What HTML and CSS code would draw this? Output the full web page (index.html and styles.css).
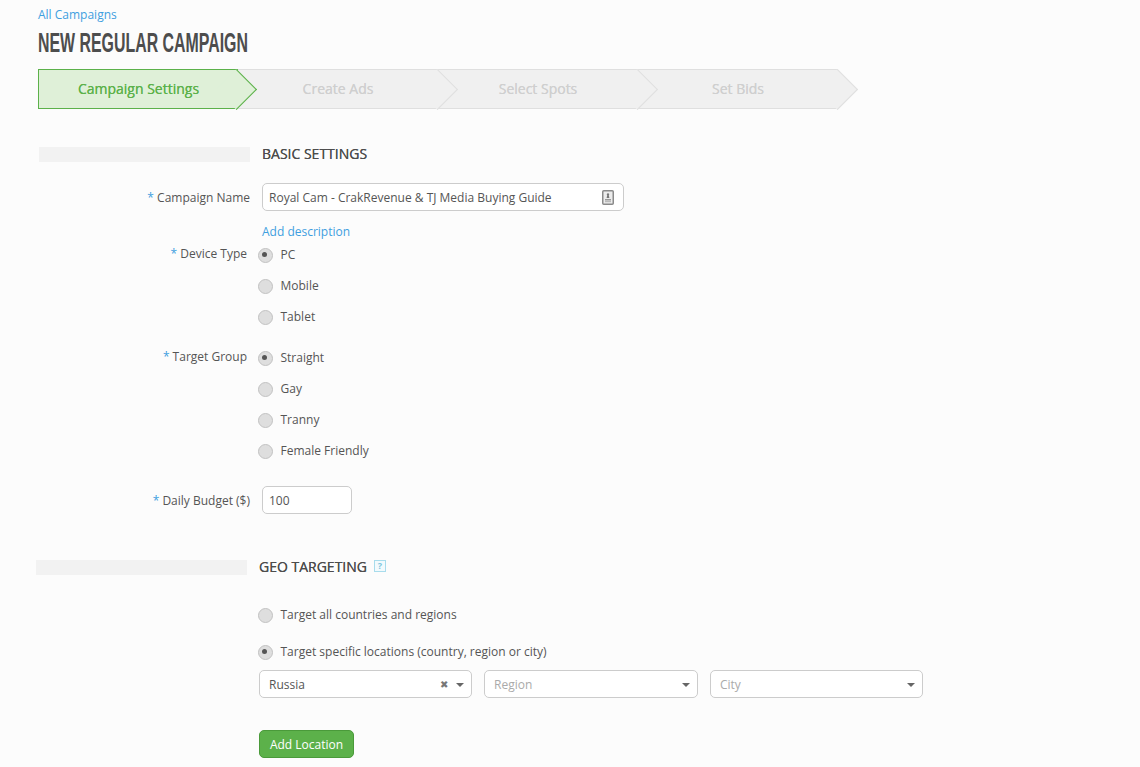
FILE: index.html
```html
<!DOCTYPE html>
<html lang="en">
<head>
<meta charset="utf-8">
<title>New Regular Campaign</title>
<link rel="stylesheet" href="styles.css">
</head>
<body>
<main class="page">
  <a class="back" href="#">All Campaigns</a>
  <h1 class="title">New Regular Campaign</h1>
  <ol class="steps">
    <li class="step step-active">Campaign Settings</li>
    <li class="step">Create Ads</li>
    <li class="step">Select Spots</li>
    <li class="step">Set Bids</li>
  </ol>

  <section class="basic">
    <div class="section-head">
      <span class="section-bar"></span>
      <h2>Basic Settings</h2>
    </div>
    <div class="row name-row">
      <label class="field-label"><i>*</i> Campaign Name</label>
      <div class="input name-input">
        <span>Royal Cam - CrakRevenue &amp; TJ Media Buying Guide</span>
        <svg class="contact-icon" width="12" height="15" viewBox="0 0 12 15" aria-hidden="true">
          <rect x="0.75" y="0.75" width="10.5" height="13.5" rx="1" fill="#ececec" stroke="#8a8a8a" stroke-width="1.5"/>
          <path d="M6 3.2a1.2 1.2 0 0 1 .8 2.1L7.4 8H4.6l.6-2.7A1.2 1.2 0 0 1 6 3.2z" fill="#777"/>
          <rect x="3" y="9" width="6" height="1.5" fill="#999"/>
          <rect x="3" y="11" width="6" height="1.2" fill="#bbb"/>
        </svg>
      </div>
    </div>
    <a class="add-desc" href="#">Add description</a>
    <div class="row radio-row device-row">
      <label class="field-label"><i>*</i> Device Type</label>
      <div class="radios">
        <div class="radio on">PC</div>
        <div class="radio">Mobile</div>
        <div class="radio">Tablet</div>
      </div>
    </div>
    <div class="row radio-row group-row">
      <label class="field-label"><i>*</i> Target Group</label>
      <div class="radios">
        <div class="radio on">Straight</div>
        <div class="radio">Gay</div>
        <div class="radio">Tranny</div>
        <div class="radio">Female Friendly</div>
      </div>
    </div>
    <div class="row budget-row">
      <label class="field-label"><i>*</i> Daily Budget ($)</label>
      <div class="input budget-input">100</div>
    </div>
  </section>

  <section class="geo">
    <div class="section-head">
      <span class="section-bar"></span>
      <h2>Geo Targeting</h2>
      <span class="help">?</span>
    </div>
    <div class="geo-body">
      <div class="radio">Target all countries and regions</div>
      <div class="radio on specific">Target specific locations (country, region or city)</div>
      <div class="selects">
        <div class="input select"><span>Russia</span><span class="clear">&#10006;</span><span class="caret"></span></div>
        <div class="input select wide placeholder"><span>Region</span><span class="caret"></span></div>
        <div class="input select placeholder"><span>City</span><span class="caret"></span></div>
      </div>
      <button class="btn" type="button">Add Location</button>
    </div>
  </section>
</main>
</body>
</html>
```
FILE: styles.css
```css
* { box-sizing: border-box; }
html, body { margin: 0; padding: 0; }
body {
  background: #fcfcfc;
  color: #555;
  font: 12px/17px "Open Sans", "Liberation Sans", sans-serif;
  height: 767px;
  overflow: hidden;
}
a { color: #3f9fdf; text-decoration: none; }
.page { padding: 6px 0 0 38px; }
.back { display: block; height: 17px; }
.title {
  margin: 0;
  height: 46px;
  font: 700 27px/40px "Liberation Sans", sans-serif;
  color: #4d4d4d;
  text-transform: uppercase;
  white-space: nowrap;
  transform: scaleX(0.589);
  transform-origin: left center;
}
.steps { display: flex; margin: 0; padding: 0; list-style: none; height: 40px; }
.step {
  position: relative;
  width: 200px;
  height: 40px;
  padding-bottom: 2px;
  display: flex;
  align-items: center;
  justify-content: center;
  background: #f0f0f0;
  border: solid #dfdfdf;
  border-width: 1px 0;
  color: #cfcfcf;
  font-size: 14px;
  font-weight: 500;
  text-shadow: 0 0 0.4px currentColor;
}
.step::after {
  content: "";
  position: absolute;
  top: 5px;
  right: -14px;
  width: 28px;
  height: 28px;
  background: inherit;
  border: solid #dfdfdf;
  border-width: 1px 1px 0 0;
  transform: rotate(45deg);
}
.step:nth-child(1) { z-index: 4; }
.step:nth-child(2) { z-index: 3; }
.step:nth-child(3) { z-index: 2; }
.step:nth-child(4) { z-index: 1; }
.step-active {
  background: #dff0d8;
  border: 1px solid #5cb14a;
  border-right: 0;
  color: #5cb14a;
}
.step-active::after { border-color: #5cb14a; right: -13px; }

.section-head { display: flex; align-items: center; height: 15px; }
.section-bar { width: 211px; height: 15px; margin-left: 1px; background: #f2f2f2; flex: none; }
.section-head h2 {
  margin: -2px 0 0 12px;
  font-size: 14px;
  font-weight: 500;
  line-height: 15px;
  color: #4d4d4d;
  text-transform: uppercase;
  text-shadow: 0 0 0.4px currentColor;
}
.basic { padding-top: 38px; }
.row { display: flex; }
.field-label { width: 212px; flex: none; text-align: right; color: #555; }
.field-label i { color: #3f9fdf; font-style: normal; }
.input {
  height: 28px;
  margin-left: 12px;
  padding: 0 6px;
  display: flex;
  align-items: center;
  background: #fff;
  border: 1px solid #ccc;
  border-radius: 5px;
  color: #555;
}
.name-row { margin-top: 21px; align-items: center; }
.name-input { width: 362px; justify-content: space-between; padding-right: 9px; }
.add-desc { display: block; margin: 12px 0 0 224px; height: 17px; }
.radio-row { margin-left: -3px; }
.device-row { margin-top: 5px; }
.group-row { margin-top: 23px; }
.radios { margin: 1px 0 0 12px; display: flex; flex-direction: column; gap: 14px; }
.radio {
  position: relative;
  padding-left: 21.5px;
  height: 17px;
  display: flex;
  align-items: center;
}
.radio::before {
  content: "";
  position: absolute;
  left: -1px;
  top: 2px;
  width: 13px;
  height: 13px;
  border-radius: 50%;
  background: #dedede;
  border: 1px solid #c2c2c2;
}
.radio.on::after {
  content: "";
  position: absolute;
  left: 3px;
  top: 6px;
  width: 5px;
  height: 5px;
  border-radius: 50%;
  background: #555;
}
.budget-row { margin-top: 27px; align-items: center; }
.budget-input { width: 90px; }

.geo { margin-top: 46px; margin-left: -3px; }
.help {
  margin: -4px 0 0 7px;
  width: 12px;
  height: 12px;
  border: 1px solid #a8dcec;
  color: #7fc6de;
  font-size: 9px;
  font-weight: 700;
  line-height: 10px;
  text-align: center;
  background: #f2fafd;
}
.geo-body { margin-left: 224px; padding-top: 31px; }
.specific { margin-top: 20px; }
.selects { display: flex; gap: 12px; margin-top: 10px; }
.select { position: relative; width: 213px; margin: 0; padding: 0 9px; }
.select.wide { width: 214px; }
.placeholder { color: #aaa; }
.caret {
  position: absolute;
  right: 7px;
  top: 12px;
  border: solid transparent;
  border-width: 4px 4px 0;
  border-top-color: #666;
}
.clear {
  position: absolute;
  right: 23px;
  top: 5px;
  font-size: 10px;
  color: #777;
}
.btn {
  display: block;
  margin-top: 32px;
  width: 95px;
  height: 28px;
  padding: 0;
  background: #5cb14a;
  border: 1px solid #4a9a3a;
  border-radius: 5px;
  color: #fff;
  font: 500 12px/17px "Open Sans", "Liberation Sans", sans-serif;
}
```
